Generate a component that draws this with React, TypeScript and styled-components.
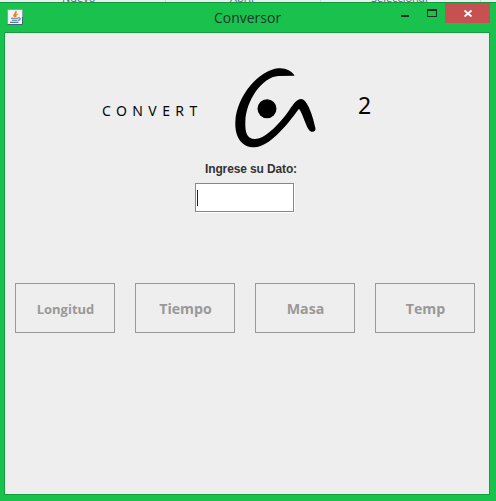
import React from "react";
import styled, { createGlobalStyle } from "styled-components";

const GlobalStyle = createGlobalStyle`
  * { box-sizing: border-box; }
  html, body { margin: 0; padding: 0; overflow: hidden; }
`;

const Desktop = styled.div`
  width: 496px;
  height: 501px;
  display: flex;
  flex-direction: column;
  background: #19c24d;
  font-family: "Open Sans", "Noto Sans", sans-serif;
`;

const Backdrop = styled.div`
  height: 2px;
  flex: none;
  display: grid;
  grid-template-columns: 166px 155px 160px 15px;
  align-items: end;
  overflow: hidden;
  background: #e9eef1;
`;

const BackdropLabel = styled.span<{ $indent: number }>`
  height: 2px;
  display: flex;
  align-items: flex-end;
  padding-left: ${(p) => p.$indent}px;
  border-right: 1px solid #ccd6dc;
  font-size: 11px;
  line-height: 8px;
  color: #5c6478;
`;

const Window = styled.section`
  flex: 1;
  display: flex;
  flex-direction: column;
  padding: 0 6px 6px 4px;
  border-top: 1px solid #119a3c;
`;

const TitleBar = styled.header`
  height: 29px;
  flex: none;
  display: grid;
  grid-template-columns: 96px 1fr 96px;
`;

const AppIcon = styled.svg`
  display: block;
  margin: 6px 0 0 3px;
`;

const Title = styled.h1`
  margin: 0;
  padding: 0 0 0 1px;
  text-align: center;
  font-size: 14px;
  font-weight: 400;
  line-height: 29px;
  letter-spacing: 0;
  color: #20352a;
`;

const Controls = styled.div`
  display: flex;
  width: 96px;
`;

const ControlButton = styled.button<{ $width: number; $close?: boolean }>`
  width: ${(p) => p.$width}px;
  height: 20px;
  flex: none;
  padding: 0;
  border: 0;
  background: ${(p) => (p.$close ? "#c75050" : "transparent")};
  svg { display: block; }
`;

const Content = styled.main`
  flex: 1;
  display: flex;
  flex-direction: column;
  align-items: center;
  border: 1px solid #14a040;
  background: #eee;
`;

const Brand = styled.div`
  width: 484px;
  height: 122px;
  flex: none;
  display: grid;
  grid-template-columns: 220px 100px 1fr;
  padding-top: 27px;
  color: #050505;
`;

const BrandWord = styled.span`
  padding: 41px 0 0 97px;
  font-family: "Noto Sans", sans-serif;
  font-size: 14px;
  line-height: 20px;
  letter-spacing: 5.4px;
`;

const BrandNumber = styled.span`
  padding: 30px 0 0 33px;
  font-family: "Noto Sans", sans-serif;
  font-size: 23px;
  line-height: 30px;
`;

const FieldLabel = styled.label`
  height: 28px;
  padding: 6px 0 0 8px;
  font-family: "Liberation Sans", Arial, sans-serif;
  font-size: 12px;
  font-weight: 700;
  line-height: 16px;
  letter-spacing: -0.13px;
  color: #333;
`;

const Field = styled.div`
  width: 99px;
  height: 29px;
  display: flex;
  align-items: center;
  margin: 0 5px 1px 0;
  border: 1px solid #7a8a99;
  background: #fff;
  box-shadow: 1px 1px 0 #fff;
  padding-left: 1px;
`;

const Caret = styled.i`
  width: 1px;
  height: 16px;
  background: #222;
`;

const ButtonRow = styled.div`
  width: 484px;
  display: flex;
  gap: 20px;
  margin-top: 70px;
  padding-left: 10px;
`;

const UnitButton = styled.button<{ $size: number }>`
  width: 100px;
  height: 50px;
  padding: 2px 0 0 1px;
  border: 1px solid #999;
  background: #eee;
  color: #999;
  font-family: "Open Sans", sans-serif;
  font-size: ${(p) => p.$size}px;
  font-weight: 700;
  line-height: 20px;
`;

const units = [
  { name: "Longitud", size: 13 },
  { name: "Tiempo", size: 14.2 },
  { name: "Masa", size: 14.2 },
  { name: "Temp", size: 14.2 },
];

export default function App() {
  return (
    <>
      <GlobalStyle />
      <Desktop>
        <Backdrop>
          <BackdropLabel $indent={62}>Nuevo</BackdropLabel>
          <BackdropLabel $indent={64}>Abrir</BackdropLabel>
          <BackdropLabel $indent={50}>Seleccionar</BackdropLabel>
        </Backdrop>
        <Window>
          <TitleBar>
            <AppIcon width="16" height="16" viewBox="0 0 16 16">
              <rect x="0.5" y="0.5" width="15" height="15" rx="1" fill="#f1f3f5" stroke="#8aa0b0" />
              <path d="M0.5 15.5H15.5V8" fill="none" stroke="#41667c" />
              <path d="M8 8C4.5 5.5 9.5 5 8.7 2C11 4.5 6.5 5.5 8 8M9 8C8 6.5 9.5 6 10.7 5" fill="none" stroke="#e88728" strokeWidth="1.2" />
              <path d="M4 9.3H11M5 11.3H10.5M3 13.4H11.5M11 9C14 8 14 11 11 11.4" fill="none" stroke="#547b9c" strokeWidth="1.1" />
            </AppIcon>
            <Title>Conversor</Title>
            <Controls>
              <ControlButton $width={23} aria-label="Minimizar">
                <svg width="23" height="20"><rect x="7" y="12" width="8" height="2" fill="#203026" /></svg>
              </ControlButton>
              <ControlButton $width={28} aria-label="Maximizar">
                <svg width="28" height="20" shapeRendering="crispEdges">
                  <path d="M10 6h10v8H10zM11 8v5h8V8z" fill="#203026" fillRule="evenodd" />
                </svg>
              </ControlButton>
              <ControlButton $width={45} $close aria-label="Cerrar">
                <svg width="45" height="20"><path d="M19.5 7.5L26.5 13.5M26.5 7.5L19.5 13.5" stroke="#fff" strokeWidth="1.8" /></svg>
              </ControlButton>
            </Controls>
          </TitleBar>
          <Content>
            <Brand>
              <BrandWord>CONVERT</BrandWord>
              <svg width="100" height="95" viewBox="0 0 300 285">
                <path d="M209 47C199 32 181 23 160 25C105 30 35 105 31 185C29 234 52 262 88 262C133 260 183 199 222 146C235 165 243 201 254 212C264 220 274 213 271 203C265 174 248 117 228 117C210 117 197 147 180 168C150 205 116 237 90 237C65 237 60 216 61 185C63 120 112 51 160 48Z" fill="#000" />
                <circle cx="126" cy="146" r="28.5" fill="#000" />
              </svg>
              <BrandNumber>2</BrandNumber>
            </Brand>
            <FieldLabel>Ingrese su Dato:</FieldLabel>
            <Field><Caret /></Field>
            <ButtonRow>
              {units.map((u) => (
                <UnitButton key={u.name} $size={u.size}>{u.name}</UnitButton>
              ))}
            </ButtonRow>
          </Content>
        </Window>
      </Desktop>
    </>
  );
}
